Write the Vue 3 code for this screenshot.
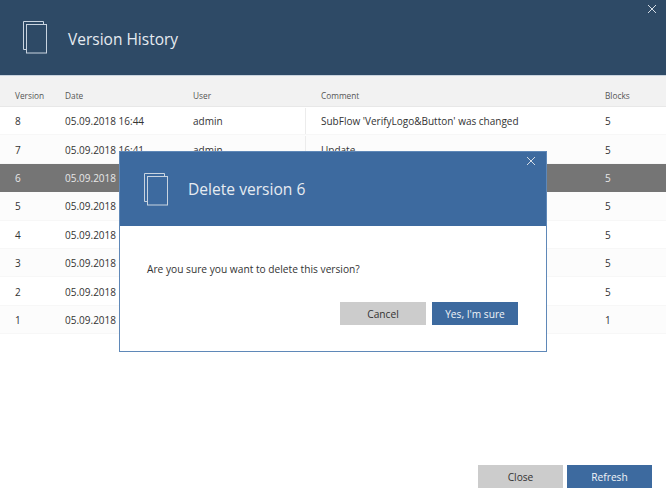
<template>
  <div class="window">
    <header class="window-head">
      <svg class="head-icon" width="25" height="33" viewBox="0 0 25 33">
        <path d="M3.500 28.500H0.500V0.500h20v3" />
        <rect x="3.500" y="3.500" width="20" height="28.500" />
      </svg>
      <h1 class="head-title">Version History</h1>
      <svg class="close-x" width="10" height="10" viewBox="0 0 10 10">
        <path d="M1 1l8 8M9 1l-8 8" />
      </svg>
    </header>

    <div class="table">
      <div class="row row--head">
        <span>Version</span><span>Date</span><span>User</span><span>Comment</span><span>Blocks</span>
      </div>
      <div
        v-for="v in versions"
        :key="v.id"
        class="row"
        :class="{ 'row--selected': v.id === 6 }"
      >
        <span>{{ v.id }}</span>
        <span>{{ v.date }}</span>
        <span>{{ v.user }}</span>
        <span class="comment" :class="{ 'comment--line': v.comment }">{{ v.comment }}</span>
        <span>{{ v.blocks }}</span>
      </div>
    </div>

    <footer class="window-foot">
      <button class="btn btn-grey">Close</button>
      <button class="btn btn-blue">Refresh</button>
    </footer>

    <div class="modal">
      <div class="modal-head">
        <svg class="head-icon" width="25" height="33" viewBox="0 0 25 33">
          <path d="M3.500 28.500H0.500V0.500h20v3" />
          <rect x="3.500" y="3.500" width="20" height="28.500" />
        </svg>
        <h2 class="modal-title">Delete version 6</h2>
        <svg class="close-x modal-x" width="10" height="10" viewBox="0 0 10 10">
          <path d="M1 1l8 8M9 1l-8 8" />
        </svg>
      </div>
      <div class="modal-body">
        <p class="question">Are you sure you want to delete this version?</p>
        <div class="modal-actions">
          <button class="btn btn-grey">Cancel</button>
          <button class="btn btn-blue">Yes, I'm sure</button>
        </div>
      </div>
    </div>
  </div>
</template>

<script setup>
const versions = [
  { id: 8, date: '05.09.2018 16:44', user: 'admin', comment: "SubFlow 'VerifyLogo&Button' was changed", blocks: 5 },
  { id: 7, date: '05.09.2018 16:41', user: 'admin', comment: 'Update', blocks: 5 },
  { id: 6, date: '05.09.2018', user: '', comment: '', blocks: 5 },
  { id: 5, date: '05.09.2018', user: '', comment: '', blocks: 5 },
  { id: 4, date: '05.09.2018', user: '', comment: '', blocks: 5 },
  { id: 3, date: '05.09.2018', user: '', comment: '', blocks: 5 },
  { id: 2, date: '05.09.2018', user: '', comment: '', blocks: 5 },
  { id: 1, date: '05.09.2018', user: '', comment: '', blocks: 1 },
];
</script>

<style scoped>
.window {
  position: relative;
  width: 666px;
  height: 495px;
  display: flex;
  flex-direction: column;
  background: #fff;
  font-family: "Open Sans", "Noto Sans", sans-serif;
  color: #333;
  overflow: hidden;
}

.window-head {
  position: relative;
  flex: none;
  height: 76px;
  display: flex;
  align-items: center;
  padding-left: 23px;
  background: #2e4a66;
  border-bottom: 1px solid #c9d3de;
  box-sizing: border-box;
}

.head-icon {
  fill: none;
  stroke: #c9d4e0;
  stroke-width: 1;
  flex: none;
}

.head-title {
  margin: 2px 0 0 20px;
  font-size: 15.500px;
  font-weight: 400;
  color: #e6ebf1;
}

.close-x {
  position: absolute;
  top: 4px;
  right: 9px;
  fill: none;
  stroke: #d5dde6;
  stroke-width: 1;
}

.row {
  display: grid;
  grid-template-columns: 50px 128px 128px 284px 1fr;
  align-items: center;
  height: 28.400px;
  padding: 1px 0 0 15px;
  font-size: 10px;
  background: #fff;
  border-bottom: 1px solid #f7f7f7;
  box-sizing: border-box;
}

.row:nth-child(odd) {
  background: #fcfcfc;
}

.row--head,
.row--head:nth-child(odd) {
  height: 31px;
  padding-top: 9px;
  font-size: 8.300px;
  color: #555;
  background: #f2f2f2;
  border-bottom: 1px solid #e8e8e8;
}

.row--selected,
.row--selected:nth-child(odd) {
  background: #757575;
  color: #e8e8e8;
  border-bottom: 0;
}

.comment--line {
  align-self: stretch;
  display: flex;
  align-items: center;
  margin-left: -16px;
  padding-left: 15px;
  border-left: 1px solid #ececec;
}

.window-foot {
  margin-top: auto;
  display: flex;
  justify-content: flex-end;
  gap: 4px;
  padding: 0 14px 7px 0;
}

.btn {
  width: 85px;
  height: 23px;
  padding: 0;
  border: 0;
  font-family: inherit;
  font-size: 10.200px;
}

.btn-grey {
  background: #cccccc;
  color: #333;
}

.btn-blue {
  background: #3d6a9f;
  color: #f0f4f8;
}

.modal {
  position: absolute;
  left: 119px;
  top: 151px;
  width: 428px;
  height: 201px;
  box-sizing: border-box;
  background: #fff;
  border: 1px solid #5f88b8;
  display: flex;
  flex-direction: column;
}

.modal-head {
  position: relative;
  flex: none;
  height: 74px;
  display: flex;
  align-items: center;
  padding-left: 24px;
  background: #3d6a9f;
}

.modal-title {
  margin: 0 0 0 19px;
  font-size: 15.600px;
  font-weight: 400;
  color: #e6ebf1;
}

.modal-x {
  top: 4px;
  right: 10px;
}

.modal-body {
  flex: 1;
  display: flex;
  flex-direction: column;
  padding: 35px 28px 0 27px;
}

.question {
  margin: 0;
  font-size: 10.200px;
  line-height: 16px;
}

.modal-actions {
  display: flex;
  justify-content: flex-end;
  gap: 6px;
  margin-top: 25px;
}

.modal-actions .btn {
  width: 86px;
}
</style>
